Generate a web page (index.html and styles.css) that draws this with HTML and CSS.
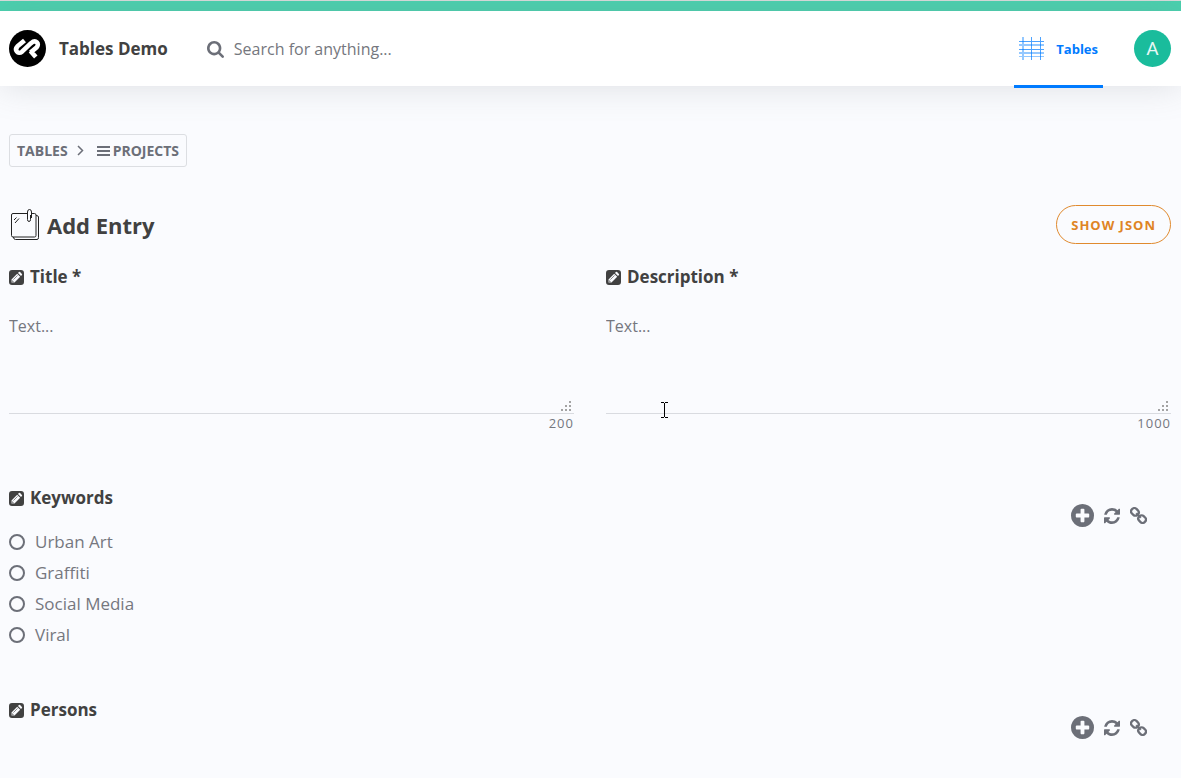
FILE: index.html
```html
<!DOCTYPE html>
<html lang="en">
<head>
<meta charset="utf-8">
<meta name="viewport" content="width=device-width, initial-scale=1">
<title>Tables Demo</title>
<link rel="stylesheet" href="styles.css">
</head>
<body>
<svg class="defs" aria-hidden="true">
  <symbol id="pencil" viewBox="0 0 15 15"><path fill="currentColor" fill-rule="evenodd" d="M3 0H12Q15 0 15 3V12Q15 15 12 15H3Q0 15 0 12V3Q0 0 3 0ZM2.5 12.5H5.5L11.2 6.8L8.2 3.8L2.5 9.5ZM9 3L12 6L12.9 5.1Q13.5 4.5 12.9 3.9L11.1 2.1Q10.5 1.5 9.9 2.1Z"/><path stroke="currentColor" stroke-width="0.6" fill="none" d="M4.4 9.600L8.600 5.400M3.200 10.200V11.800H4.800"/></symbol>
  <symbol id="plus" viewBox="128 128 1536 1536"><path fill="currentColor" d="M1344 960v-128q0-26-19-45t-45-19h-256v-256q0-26-19-45t-45-19h-128q-26 0-45 19t-19 45v256h-256q-26 0-45 19t-19 45v128q0 26 19 45t45 19h256v256q0 26 19 45t45 19h128q26 0 45-19t19-45v-256h256q26 0 45-19t19-45zm320-64q0 209-103 385.500t-279.500 279.500-385.500 103-385.500-103-279.500-279.500-103-385.500 103-385.500 279.500-279.500 385.500-103 385.500 103 279.500 279.500 103 385.500z"/></symbol>
  <symbol id="refresh" viewBox="128 128 1536 1536"><path fill="currentColor" d="M1639 1056q0 5-1 7-64 268-268 434.500t-478 166.500q-146 0-282.500-55t-243.500-157l-129 129q-19 19-45 19t-45-19-19-45v-448q0-26 19-45t45-19h448q26 0 45 19t19 45-19 45l-137 137q71 66 161 102t187 36q134 0 250-65t186-179q11-17 53-117 8-23 30-23h192q13 0 22.500 9.500t9.500 22.500zm25-800v448q0 26-19 45t-45 19h-448q-26 0-45-19t-19-45 19-45l138-138q-148-137-349-137-134 0-250 65t-186 179q-11 17-53 117-8 23-30 23h-199q-13 0-22.500-9.500t-9.500-22.500v-7q65-268 270-434.500t480-166.500q146 0 284 55.500t245 156.500l130-129q19-19 45-19t45 19 19 45z"/></symbol>
  <symbol id="link" viewBox="0 0 17 17"><g fill="none" stroke="currentColor" stroke-width="2.300"><rect x="-3.900" y="-3.200" width="7.800" height="6.400" rx="2.900" transform="translate(4.900 4.900) rotate(45)"/><rect x="-3.900" y="-3.200" width="7.800" height="6.400" rx="2.900" transform="translate(12.100 12.100) rotate(45)"/><path d="M6.200 6.200L10.800 10.800"/></g></symbol>
  <symbol id="grip" viewBox="0 0 12 12"><path fill="#a3a3a3" d="M9 0h2v2h-2zM9 4h2v2h-2zM5 4h2v2h-2zM9 8h2v2h-2zM5 8h2v2h-2zM1 8h2v2h-2z"/></symbol>
</svg>
<div class="topbar"></div>
<header class="header">
  <a class="brand" href="#">
    <svg class="logo" viewBox="0 0 37 37" aria-hidden="true"><circle cx="18.500" cy="18.500" r="18.500"/><path fill="none" stroke="#fff" stroke-width="4.600" stroke-linejoin="round" d="M15.500 10.500L8.500 16.300C5 20 9 25 13 21.700L22 13.200C27 9 31 14 27.500 17.500L21.500 22.500M21.500 21L26.800 27"/></svg>
    <span>Tables Demo</span>
  </a>
  <label class="search">
    <svg class="search-icon" viewBox="64 128 1664 1664" aria-hidden="true"><path fill="currentColor" d="M1216 832q0-185-131.500-316.500t-316.500-131.500-316.500 131.500-131.500 316.500 131.500 316.500 316.500 131.500 316.500-131.500 131.500-316.500zm512 832q0 52-38 90t-90 38q-54 0-90-38l-343-342q-179 124-399 124-143 0-273.500-55.500t-225-150-150-225-55.500-273.500 55.500-273.500 150-225 225-150 273.500-55.500 273.500 55.500 225 150 150 225 55.500 273.500q0 220-124 399l343 343q37 37 37 90z"/></svg>
    <input class="search-input" type="search" aria-label="Search" placeholder="Search for anything...">
  </label>
  <nav class="nav">
    <a class="tab" href="#">
      <svg class="grid-icon" viewBox="0 0 25 23" aria-hidden="true"><g fill="#007bff"><path d="M12 0h1v23h-1zM21 0h1v23h-1zM0 4h25v1H0zM0 12h25v1H0z" opacity=".7"/><path d="M3 0h2v23H3zM0 7h25v2H0zM0 15h25v2H0zM0 19h25v1H0z" opacity=".42"/></g></svg>
      <span>Tables</span>
    </a>
    <button class="avatar" type="button">A</button>
  </nav>
</header>
<main class="main">
  <nav class="crumbs" aria-label="Breadcrumb">
    <a href="#">TABLES</a>
    <svg class="chevron" viewBox="0 0 7 11" aria-hidden="true"><path fill="none" stroke="currentColor" stroke-width="1.500" d="M1 1L5.500 5.500L1 10"/></svg>
    <a class="crumb-current" href="#"><svg class="bars" viewBox="0 0 13 10" aria-hidden="true"><path fill="currentColor" d="M0 0h13v2H0zM0 4h13v2H0zM0 8h13v2H0z"/></svg>PROJECTS</a>
  </nav>
  <div class="title-row">
    <h1 class="title">
      <svg class="note" viewBox="0 0 28 31" aria-hidden="true"><g fill="none" stroke="#222"><path d="M16 4.500H2Q.5 4.500 .5 6V26.500Q.5 28 2 28H23.500Q25 28 25 26.500V6Q25 4.500 23.500 4.500H21"/><path d="M25 6.500Q27.500 6.500 27.500 8V28.500Q27.500 30.500 26 30.500H4.500Q2.500 30.500 2.500 28"/><path d="M20.500 9V3Q20.500 .5 18.500 .5Q16.500 .5 16.500 3V10.500Q16.500 12.500 18 12.500Q19.500 12.500 19.500 10.500V6M3 11L5.500 8.500M4 14L8 9.500"/></g></svg>
      Add Entry
    </h1>
    <button class="json-button" type="button">SHOW JSON</button>
  </div>
  <form>
    <div class="fields">
      <div>
        <label class="label" for="title"><svg class="pencil"><use href="#pencil"/></svg>Title *</label>
        <div class="area"><textarea id="title" placeholder="Text..." maxlength="200"></textarea><svg class="grip" aria-hidden="true"><use href="#grip"/></svg></div>
        <p class="count">200</p>
      </div>
      <div>
        <label class="label" for="description"><svg class="pencil"><use href="#pencil"/></svg>Description *</label>
        <div class="area"><textarea id="description" placeholder="Text..." maxlength="1000"></textarea><svg class="grip" aria-hidden="true"><use href="#grip"/></svg></div>
        <p class="count">1000</p>
      </div>
    </div>
    <fieldset class="group" aria-labelledby="keywords">
      <div>
        <h2 class="label" id="keywords"><svg class="pencil"><use href="#pencil"/></svg>Keywords</h2>
        <div class="options">
          <label class="option"><input type="checkbox">Urban Art</label>
          <label class="option"><input type="checkbox">Graffiti</label>
          <label class="option"><input type="checkbox">Social Media</label>
          <label class="option"><input type="checkbox">Viral</label>
        </div>
      </div>
      <div class="actions">
        <button type="button" aria-label="Add keyword"><svg class="plus"><use href="#plus"/></svg></button>
        <button type="button" aria-label="Refresh keywords"><svg class="refresh"><use href="#refresh"/></svg></button>
        <button type="button" aria-label="Link keywords"><svg class="link"><use href="#link"/></svg></button>
      </div>
    </fieldset>
    <fieldset class="group" aria-labelledby="persons">
      <h2 class="label" id="persons"><svg class="pencil"><use href="#pencil"/></svg>Persons</h2>
      <div class="actions">
        <button type="button" aria-label="Add person"><svg class="plus"><use href="#plus"/></svg></button>
        <button type="button" aria-label="Refresh persons"><svg class="refresh"><use href="#refresh"/></svg></button>
        <button type="button" aria-label="Link persons"><svg class="link"><use href="#link"/></svg></button>
      </div>
    </fieldset>
  </form>
</main>
<svg class="cursor" viewBox="0 0 7 16" aria-hidden="true"><path fill="#000" d="M0 0h3v1H0zM4 0h3v1H4zM3 1h1v14H3zM0 15h3v1H0zM4 15h3v1H4z"/></svg>
</body>
</html>
```
FILE: styles.css
```css
* { box-sizing: border-box; }
body {
  margin: 0;
  background: #fafbfe;
  color: #414141;
  font: 17px/24px "Open Sans", "Noto Sans", sans-serif;
}
a { color: inherit; text-decoration: none; }
button { font: inherit; cursor: pointer; }
svg { display: block; flex: none; }
.defs { position: absolute; width: 0; height: 0; }
.topbar { height: 11px; background: #48d1ae; border-top: 1px solid #d8dcdb; }
.header {
  display: flex;
  align-items: center;
  height: 75px;
  padding: 0 10px 0 9px;
  background: #fff;
  box-shadow: 0 0 35px rgba(130, 134, 140, .24);
}
.brand { display: flex; align-items: center; gap: 13px; font-weight: 700; }
.brand span, .search, .tab span { padding-top: 1px; }
.logo { width: 37px; height: 37px; }
.search { display: flex; flex: 1; align-items: center; gap: 10px; margin-left: 39px; color: #6c6f78; }
.search-icon { width: 17px; height: 17px; }
.search-input {
  flex: 1;
  min-width: 0;
  padding: 0;
  border: 0;
  outline: 0;
  background: none;
  color: inherit;
  font: inherit;
  font-size: 16px;
}
::placeholder { color: #75777e; opacity: 1; }
.nav { display: flex; align-self: stretch; align-items: center; gap: 31px; }
.tab {
  display: flex;
  align-items: center;
  gap: 12px;
  height: 77px;
  margin-top: 2px;
  padding: 0 5px;
  border-bottom: 3px solid #007bff;
  color: #007bff;
  font-size: 13px;
  font-weight: 700;
}
.grid-icon { width: 25px; height: 23px; }
.avatar {
  width: 37px;
  height: 37px;
  padding: 0;
  border: 0;
  border-radius: 50%;
  background: #1abc9c;
  color: #e8f8f5;
  font-family: Roboto, sans-serif;
  font-size: 19px;
}
.main { padding: 48px 10px 0 9px; }
.crumbs {
  display: flex;
  align-items: center;
  width: max-content;
  height: 33px;
  padding: 0 7px;
  border: 1px solid #dcdee2;
  border-radius: 3px;
  color: #6c6f78;
  font-size: 14px;
  font-weight: 700;
}
.chevron { width: 7px; height: 11px; margin: 0 13px 0 9px; }
.crumb-current { display: flex; align-items: center; gap: 3px; }
.bars { width: 13px; height: 10px; }
.title-row { display: flex; align-items: center; justify-content: space-between; margin-top: 38px; }
.title { display: flex; align-items: center; gap: 8px; margin: 0; padding-left: 2px; font-size: 22px; line-height: 32px; }
.note { width: 28px; height: 31px; }
.json-button {
  height: 39px;
  padding: 0 14px;
  border: 1px solid #e08a2e;
  border-radius: 20px;
  background: none;
  color: #df8424;
  font-size: 13px;
  font-weight: 700;
  letter-spacing: 1px;
}
.fields { display: grid; grid-template-columns: 1fr 1fr; gap: 32px; margin-top: 21px; }
.label { display: flex; align-items: center; gap: 6px; margin: 0; font-size: 17px; font-weight: 700; line-height: 24px; }
.pencil { width: 15px; height: 15px; }
.area { position: relative; margin-top: 25px; }
.area textarea {
  display: block;
  width: 100%;
  height: 100px;
  padding: 0;
  border: 0;
  border-bottom: 1px solid #d9dbe0;
  outline: 0;
  background: none;
  color: inherit;
  font: inherit;
  font-size: 16px;
  resize: none;
}
.grip { position: absolute; right: 2px; bottom: 1px; width: 12px; height: 12px; }
.count { margin: 0; color: #75777e; font-size: 13px; line-height: 18px; text-align: right; letter-spacing: 1px; }
.group { display: flex; justify-content: space-between; align-items: flex-start; margin: 54px 0 0; padding: 0; border: 0; color: #414141; }
.group + .group { margin-top: 48px; }
.options { margin-top: 16px; color: #75777e; }
.option { display: flex; align-items: center; gap: 10px; height: 31px; }
.option input {
  width: 16px;
  height: 16px;
  margin: 0;
  border: 2px solid #6c6f78;
  border-radius: 50%;
  appearance: none;
}
.actions { display: flex; align-items: center; gap: 10px; margin: 18px 24px 0 0; color: #6c6f78; }
.actions button { padding: 0; border: 0; background: none; color: inherit; }
.plus { width: 23px; height: 23px; }
.refresh { width: 16px; height: 16px; }
.link { width: 17px; height: 17px; }
.cursor { position: absolute; left: 661px; top: 402px; width: 7px; height: 16px; }
```
